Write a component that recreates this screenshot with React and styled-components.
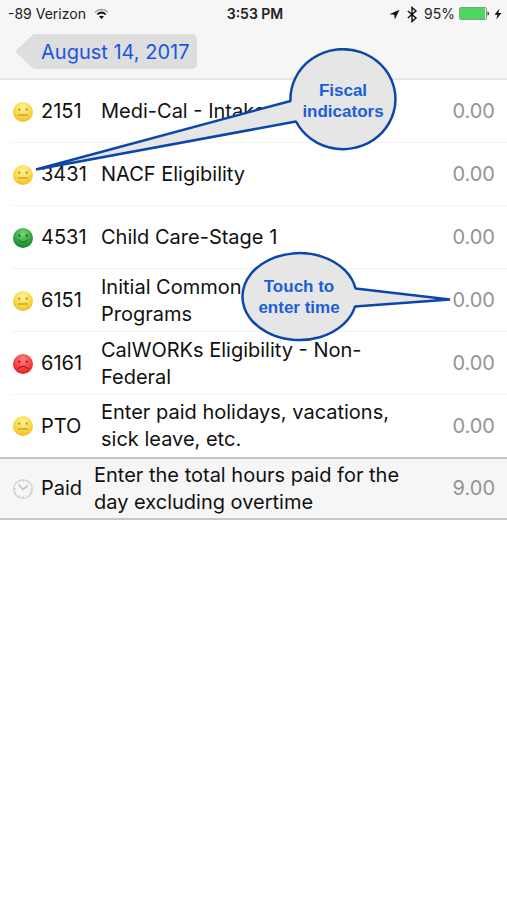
import React from "react";
import styled, { createGlobalStyle } from "styled-components";

const GlobalStyle = createGlobalStyle`
  *, *::before, *::after { box-sizing: border-box; }
  body {
    margin: 0;
    background: #fff;
    color: #111;
    font-family: Inter, "Liberation Sans", sans-serif;
    font-size: 20px;
    line-height: 27px;
  }
`;

const Screen = styled.div`
  min-height: 100vh;
  background: #fff;
`;

const Header = styled.header`
  height: 80px;
  background: #f6f6f6;
  border-bottom: 2px solid #e6e6e6;
`;

const StatusBar = styled.div`
  display: grid;
  grid-template-columns: 1fr auto 1fr;
  align-items: center;
  height: 28px;
  padding: 0 5px 0 8px;
  font-size: 14px;
  line-height: 16px;
  color: #222;
`;

const StatusGroup = styled.div`
  display: flex;
  align-items: center;
  justify-content: ${(p) => (p.$end ? "flex-end" : "flex-start")};
  gap: ${(p) => (p.$end ? "4px" : "8px")};
`;

const Clock = styled.time`
  font-weight: 600;
`;

const NavBar = styled.nav`
  display: flex;
  padding: 6px 15px;
`;

const BackButton = styled.button`
  display: flex;
  align-items: stretch;
  height: 35px;
  padding: 0;
  border: 0;
  background: none;
  color: #1a55dd;
  font: inherit;
  cursor: pointer;
`;

const BackLabel = styled.span`
  display: flex;
  align-items: center;
  padding: 2px 8px 0 4px;
  border-radius: 0 5px 5px 0;
  background: #dedede;
`;

const Main = styled.main`
  position: relative;
`;

const Rows = styled.ul`
  margin: 0;
  padding: 0;
  list-style: none;
`;

const Row = styled.li`
  display: grid;
  grid-template-columns: 22px ${(p) => (p.$total ? "45px" : "52px")} minmax(0, 312px) minmax(48px, 1fr);
  column-gap: 8px;
  align-items: center;
  height: 63px;
  padding: 0 12px 0 11px;
  background: ${(p) => (p.$total ? "#f6f6f6" : "#fff")};
  border: solid #c6c6c6;
  border-width: ${(p) => (p.$total ? "2px 0" : "0")};
  ${(p) =>
    !p.$total &&
    `background: linear-gradient(#f3f3f3, #f3f3f3) 12px 100% / 100% 1px no-repeat #fff;`}
  &:nth-last-child(2) { background: #fff; height: 62px; }
`;

const Code = styled.label`
  white-space: nowrap;
`;

const Description = styled.span``;

const Hours = styled.input`
  width: 100%;
  min-width: 0;
  padding: 0;
  border: 0;
  outline: 0;
  background: transparent;
  color: #949494;
  font: inherit;
  text-align: right;
`;

const Callout = styled.aside`
  position: absolute;
  pointer-events: none;
  color: #1a5ed8;
  font: bold 17px/21px "Liberation Sans", sans-serif;
  text-align: center;
  svg { display: block; }
`;

const FiscalCallout = styled(Callout)`
  top: -32px;
  left: 33px;
`;

const TimeCallout = styled(Callout)`
  top: 171px;
  right: 55px;
`;

const CalloutText = styled.p`
  position: absolute;
  margin: 0;
  top: ${(p) => p.$top}px;
  left: ${(p) => p.$left}px;
  width: ${(p) => p.$width}px;
`;

const FACES = {
  neutral: { light: "#fff19a", mid: "#fbdc4c", edge: "#f0ba24", ink: "#a88b2c", mouth: "M6.5 14h9" },
  happy: { light: "#7bd67e", mid: "#39ad42", edge: "#12812a", ink: "#0b6420", mouth: "M6.5 13c2 3 7 3 9 0" },
  sad: { light: "#ff8585", mid: "#fb4545", edge: "#dc1f29", ink: "#8e1219", mouth: "M6 16c2-3.5 8-3.500 10 0" },
};

function Face({ mood }) {
  const f = FACES[mood];
  const id = `face-${mood}`;
  return (
    <svg width="22" height="22" viewBox="0 0 22 22" role="img" aria-label={mood}>
      <defs>
        <radialGradient id={id} cx="50%" cy="30%" r="70%">
          <stop offset="0" stopColor={f.light} />
          <stop offset="0.55" stopColor={f.mid} />
          <stop offset="1" stopColor={f.edge} />
        </radialGradient>
      </defs>
      <circle cx="12" cy="11" r="10" fill={`url(#${id})`} />
      <ellipse cx="8.3" cy="8.6" rx="1" ry="1.2" fill={f.ink} />
      <ellipse cx="15.7" cy="8.6" rx="1" ry="1.2" fill={f.ink} />
      <path d={f.mouth} transform="translate(1 0)" fill="none" stroke={f.ink} strokeWidth="1" strokeLinecap="round" />
    </svg>
  );
}

function ClockIcon() {
  return (
    <svg width="22" height="22" viewBox="-1 0 22 22" fill="none" stroke="#c8c8c8" aria-hidden="true">
      <circle cx="11" cy="11" r="9.3" strokeWidth="1.1" />
      <path d="M6.5 6.5L11 11.5L16 7.5" strokeWidth="1.7" />
      <path d="M11 2v2M11 18v2M2 11h2M18 11h2M6.5 3.5l.6 1M15.5 3.5l-.6 1M6.5 18.5l.6-1M15.5 18.5l-.6-1M3.5 15.5l1-.6M18.5 15.5l-1-.6" />
    </svg>
  );
}

function WifiIcon() {
  return (
    <svg width="15" height="12" viewBox="0 0 15 12" fill="none" aria-hidden="true">
      <path d="M1 4.2C4.8.6 10.2.6 14 4.2" stroke="#999" strokeWidth="1.5" />
      <path d="M3.2 6.5c2.6-2.4 6-2.4 8.6 0" stroke="#111" strokeWidth="1.7" />
      <path d="M5 8.6c1.5-1.3 3.5-1.3 5 0L7.5 11z" fill="#111" />
    </svg>
  );
}

function LocationIcon() {
  return (
    <svg width="11" height="11" viewBox="0 0 11 11" aria-hidden="true">
      <path d="M10.5.8L.4 5.2l4.9.5.5 4.9z" fill="#111" />
    </svg>
  );
}

function BluetoothIcon() {
  return (
    <svg width="16" height="17" viewBox="0 0 16 17" aria-hidden="true">
      <path d="M3.8 5L12 12l-4 3.5V1.500L12 5l-8.200 7" fill="none" stroke="#111" strokeWidth="1.4" />
    </svg>
  );
}

function BatteryIcon() {
  return (
    <svg width="31" height="14" viewBox="0 0 31 14" aria-hidden="true">
      <rect x=".5" y=".5" width="27" height="12" rx="1.5" fill="#eee" stroke="#8b9b8b" />
      <rect x="1" y="1" width="25" height="11" rx="1" fill="#4cd763" />
      <path d="M28.5 4.5c2 .3 2 3.700 0 4z" fill="#333" />
    </svg>
  );
}

function BoltIcon() {
  return (
    <svg width="8" height="12" viewBox="0 0 8 12" aria-hidden="true">
      <path d="M5.5.5L.5 6.8h3L2.2 11.500 7.500 5H4.300z" fill="#111" />
    </svg>
  );
}

function BackArrow() {
  return (
    <svg width="22" height="35" viewBox="0 0 22 35" aria-hidden="true">
      <path d="M22 0h-1c-2 0-3 .5-4.5 2L2 15.500c-1.300 1.300-1.300 2.700 0 4L16.500 33c1.500 1.500 2.500 2 4.500 2h1z" fill="#dedede" />
    </svg>
  );
}

const entries = [
  { mood: "neutral", code: "2151", text: ["Medi-Cal - Intake"], hours: "0.00" },
  { mood: "neutral", code: "3431", text: ["NACF Eligibility"], hours: "0.00" },
  { mood: "happy", code: "4531", text: ["Child Care-Stage 1"], hours: "0.00" },
  { mood: "neutral", code: "6151", text: ["Initial Common", "Programs"], hours: "0.00" },
  { mood: "sad", code: "6161", text: ["CalWORKs Eligibility - Non-", "Federal"], hours: "0.00" },
  { mood: "neutral", code: "PTO", text: ["Enter paid holidays, vacations,", "sick leave, etc."], hours: "0.00" },
  { code: "Paid", text: ["Enter the total hours paid for the", "day excluding overtime"], hours: "9.00", total: true },
];

function TimeRow({ entry }) {
  const id = `hours-${entry.code}`;
  return (
    <Row $total={entry.total}>
      {entry.total ? <ClockIcon /> : <Face mood={entry.mood} />}
      <Code htmlFor={id}>{entry.code}</Code>
      <Description>
        {entry.text.map((line, i) => (
          <React.Fragment key={line}>
            {i > 0 && <br />}
            {line}
          </React.Fragment>
        ))}
      </Description>
      <Hours id={id} inputMode="decimal" defaultValue={entry.hours} />
    </Row>
  );
}

export default function App() {
  return (
    <Screen>
      <GlobalStyle />
      <Header>
        <StatusBar>
          <StatusGroup>
            <span>-89 Verizon</span>
            <WifiIcon />
          </StatusGroup>
          <Clock>3:53 PM</Clock>
          <StatusGroup $end>
            <LocationIcon />
            <BluetoothIcon />
            <span>95%</span>
            <BatteryIcon />
            <BoltIcon />
          </StatusGroup>
        </StatusBar>
        <NavBar>
          <BackButton type="button">
            <BackArrow />
            <BackLabel>August 14, 2017</BackLabel>
          </BackButton>
        </NavBar>
      </Header>
      <Main>
        <Rows>
          {entries.map((entry) => (
            <TimeRow key={entry.code} entry={entry} />
          ))}
        </Rows>
        <FiscalCallout>
          <svg width="365" height="126" viewBox="34 48 365 126" aria-hidden="true">
            <path
              d="M291.5 101A52.5 50 0 1 1 297 121.5L37 169.5Z"
              fill="#e6e6e6" stroke="#0b47a8" strokeWidth="2.5" strokeLinejoin="bevel"
            />
          </svg>
          <CalloutText $top={32} $left={260} $width={100}>
            Fiscal<br />indicators
          </CalloutText>
        </FiscalCallout>
        <TimeCallout>
          <svg width="212" height="92" viewBox="240 251 212 92" aria-hidden="true">
            <path
              d="M355.5 288.5A57 43.5 0 1 0 355 306.5L450 299.5Z"
              fill="#e6e6e6" stroke="#0b47a8" strokeWidth="2.5" strokeLinejoin="bevel"
            />
          </svg>
          <CalloutText $top={25} $left={9} $width={100}>
            Touch to<br />enter time
          </CalloutText>
        </TimeCallout>
      </Main>
    </Screen>
  );
}
